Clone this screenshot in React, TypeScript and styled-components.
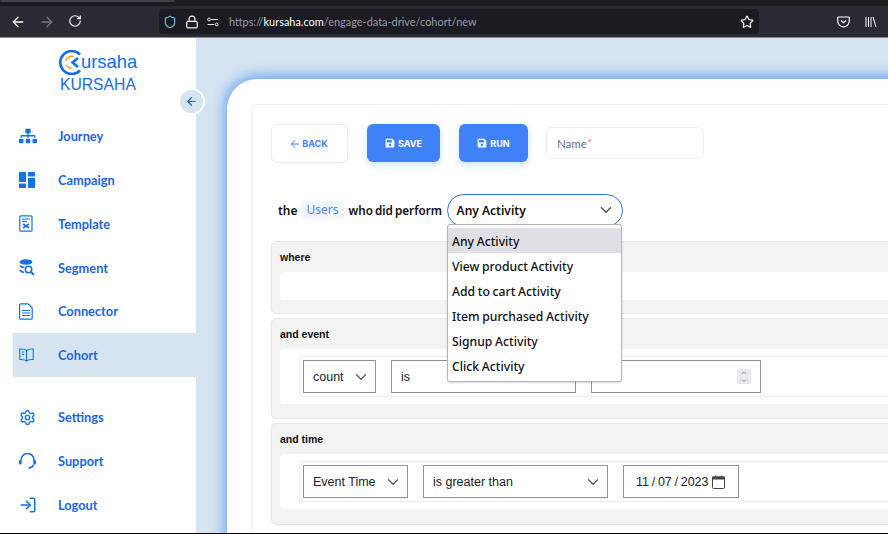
import React from 'react';
import styled, { createGlobalStyle } from 'styled-components';
import {
  ArrowLeft,
  ArrowRight,
  RotateCw,
  Shield,
  Lock,
  Star,
  ChevronDown,
  ChevronUp,
  Settings,
  LogIn,
} from 'lucide-react';
import { FaSitemap, FaSave } from 'react-icons/fa';

const GlobalStyle = createGlobalStyle`
  html, body {
    margin: 0;
    padding: 0;
    width: 888px;
    height: 534px;
    overflow: hidden;
    background: #000;
  }
  * { box-sizing: border-box; }
`;

const Page = styled.div`
  width: 888px;
  height: 533px;
  display: flex;
  flex-direction: column;
  overflow: hidden;
  font-family: 'Lato', sans-serif;
`;

// ===== BROWSER CHROME =====
const TabStrip = styled.div`
  height: 6px;
  flex: none;
  background: #1c1b22;
`;

const ActiveTabEdge = styled.div`
  width: 175px;
  height: 2px;
  background: #42414d;
  border-radius: 0 0 4px 4px;
`;

const Toolbar = styled.div`
  height: 32px;
  flex: none;
  display: flex;
  align-items: center;
  background: #2b2a33;
  border-bottom: 1px solid #8b8b90;
  color: #fbfbfe;
`;

const NavButton = styled.span<{ $dim?: boolean }>`
  width: 28.5px;
  display: flex;
  justify-content: center;
  color: ${p => (p.$dim ? '#77767e' : '#fbfbfe')};
`;

const NavGroup = styled.div`
  display: flex;
  width: 159px;
  padding-left: 4px;
`;

const UrlBar = styled.div`
  width: 600px;
  height: 25px;
  display: flex;
  align-items: center;
  background: #1c1b22;
  border-radius: 4px;
  padding: 0 5px 0 4px;
  gap: 8px;
`;

const Url = styled.div`
  flex: 1;
  font-family: 'Lato', sans-serif;
  font-size: 10.95px;
  color: #9a9aa0;
  white-space: nowrap;
  margin-left: 2px;
`;

const UrlHost = styled.span`
  color: #fbfbfe;
`;

const ToolbarRight = styled.div`
  flex: 1;
  display: flex;
  justify-content: flex-end;
  align-items: center;
  gap: 15px;
  padding-right: 11px;
`;

const LibraryIcon = styled.svg`
  width: 12px;
  height: 12px;
`;

// ===== LAYOUT =====
const Body = styled.div`
  flex: 1;
  display: flex;
  min-height: 0;
`;

const Sidebar = styled.aside`
  width: 196px;
  flex: none;
  position: relative;
  background: #fff;
  display: flex;
  flex-direction: column;
`;

const Brand = styled.div`
  height: 76.3px;
  padding: 11px 0 0 58px;
  color: #0f6fe4;
`;

const BrandTop = styled.div`
  display: flex;
  align-items: center;
  height: 26px;
`;

const BrandTopText = styled.span`
  font-family: 'Liberation Sans', sans-serif;
  font-size: 18.4px;
  margin-left: -3px;
`;

const BrandName = styled.div`
  font-family: 'Liberation Sans', sans-serif;
  font-size: 15.7px;
  line-height: 18px;
  margin: 1px 0 0 2px;
`;

const Collapse = styled.button`
  position: absolute;
  top: 50px;
  left: 178px;
  width: 27px;
  height: 27px;
  border-radius: 50%;
  border: 2px solid #fff;
  background: #d6e4f2;
  color: #1668e3;
  display: flex;
  align-items: center;
  justify-content: center;
  padding: 0;
  z-index: 2;
`;

const NavList = styled.nav`
  display: flex;
  flex-direction: column;
  padding-left: 13px;
`;

const NavItem = styled.div<{ $active?: boolean; $gapTop?: number }>`
  height: 43.8px;
  display: flex;
  align-items: center;
  padding-left: 6px;
  margin-top: ${p => p.$gapTop ?? 0}px;
  background: ${p => (p.$active ? '#d6e4f2' : 'transparent')};
  color: #1668e3;
`;

const NavIcon = styled.span`
  width: 39px;
  height: 20px;
  flex: none;
  display: flex;
  align-items: center;
  color: #1273e6;
`;

const NavLabel = styled.span`
  font-size: 12.8px;
  font-weight: 700;
  color: #1b66e0;
`;

const Main = styled.main`
  flex: 1;
  min-width: 0;
  background: #d6e4f2;
  padding: 41px 0 0 31px;
  overflow: hidden;
`;

const Card = styled.section`
  width: 720px;
  height: 520px;
  background: #fff;
  border-radius: 30px 0 0 0;
  box-shadow: 0 -1px 14px 2px #5f9fee;
  padding: 25px 0 0 25px;
`;

const Inner = styled.div`
  width: 700px;
  height: 480px;
  border: 1px solid #f0f0f0;
  border-radius: 6px 0 0 0;
  padding: 19px 0 0 18px;
`;

// ===== ACTION BAR =====
const Actions = styled.div`
  display: flex;
  align-items: flex-start;
`;

const BackButton = styled.button`
  width: 77px;
  height: 39px;
  background: #fff;
  border: 1px solid #e8ebef;
  border-radius: 6px;
  color: #3f82f7;
  font-family: 'Inter', sans-serif;
  font-size: 9px;
  font-weight: 700;
  display: flex;
  align-items: center;
  justify-content: center;
  gap: 1px;
  padding: 0 2px 0 0;
`;

const PrimaryButton = styled.button<{ $w: number; $ml: number }>`
  width: ${p => p.$w}px;
  height: 38px;
  margin-left: ${p => p.$ml}px;
  background: #3f82f7;
  border: none;
  border-radius: 6px;
  color: #fff;
  font-family: 'Inter', sans-serif;
  font-size: 9px;
  font-weight: 700;
  display: flex;
  align-items: center;
  justify-content: center;
  gap: 3px;
  padding: 0;
  box-shadow: 0 3px 7px rgba(63, 130, 247, 0.25);
`;

const NameField = styled.div`
  width: 158px;
  height: 32px;
  margin: 3px 0 0 18px;
  border: 1px solid #eceff2;
  border-radius: 5px;
  display: flex;
  align-items: center;
  padding-left: 10px;
  font-size: 11.5px;
  color: #5f7080;
`;

const Required = styled.sup`
  color: #ef4444;
  font-size: 9px;
  line-height: 0;
  margin-left: 1px;
`;

// ===== SENTENCE ROW =====
const Sentence = styled.div`
  display: flex;
  align-items: center;
  height: 34px;
  margin-top: 30px;
  padding-left: 7px;
  font-family: 'Noto Sans', sans-serif;
  font-size: 12px;
  font-weight: 600;
  color: #111;
  position: relative;
`;

const Perform = styled.span`
  width: 93px;
  font-size: 11.7px;
  white-space: nowrap;
  word-spacing: -1px;
`;

const UsersTag = styled.span`
  background: #f0f6fd;
  color: #4b86f0;
  font-weight: 400;
  padding: 0 5px;
  line-height: 18px;
  margin: 0 5px 0 4px;
`;

const ActivitySelect = styled.div`
  width: 176px;
  height: 33px;
  margin-left: 5px;
  border: 1px solid #2f6fe6;
  border-radius: 17px;
  display: flex;
  align-items: center;
  justify-content: space-between;
  padding: 0 7px 0 9px;
  color: #111;
`;

const Menu = styled.div`
  position: absolute;
  top: 31px;
  left: 176px;
  width: 175px;
  height: 158px;
  background: #fff;
  border: 1px solid #b5b5bb;
  border-radius: 3px;
  box-shadow: 0 1px 2px rgba(0, 0, 0, 0.15);
  padding-top: 3px;
  z-index: 3;
`;

const MenuOption = styled.div<{ $selected?: boolean }>`
  height: 25px;
  display: flex;
  align-items: center;
  padding: 1px 0 0 4px;
  font-size: 12.2px;
  font-weight: 500;
  word-spacing: -0.5px;
  background: ${p => (p.$selected ? '#e0dfe5' : 'transparent')};
  color: #111;
`;

// ===== FILTER SECTIONS =====
const Sections = styled.div`
  margin: 14px 0 0 0;
  display: flex;
  flex-direction: column;
  gap: 4px;
`;

const Section = styled.div<{ $h: number }>`
  height: ${p => p.$h}px;
  width: 640px;
  background: #f3f3f3;
  border: 1px solid #e6e6e6;
  border-radius: 5px 0 0 5px;
  padding: 9px 0 0 8px;
`;

const SectionTitle = styled.div`
  font-family: 'Liberation Sans', sans-serif;
  font-size: 10.5px;
  font-weight: 700;
  line-height: 12px;
  color: #111;
`;

const SectionBody = styled.div<{ $h: number }>`
  height: ${p => p.$h}px;
  background: #fff;
  border-radius: 4px 0 0 4px;
  margin-top: 9px;
  padding: 7px 0 0 19px;
`;

const Conditions = styled.div`
  height: 41px;
  border: 1px solid #eee;
  border-right: none;
  border-radius: 3px 0 0 3px;
  display: flex;
  align-items: center;
  gap: 15px;
  padding-left: 3px;
  font-family: 'Liberation Sans', sans-serif;
  font-size: 12.5px;
  color: #222;
`;

const Control = styled.div<{ $w: number }>`
  width: ${p => p.$w}px;
  height: 33px;
  border: 1px solid #8f8f9d;
  display: flex;
  align-items: center;
  justify-content: space-between;
  padding: 0 5px 0 9px;
  white-space: nowrap;
`;

const NumberControl = styled(Control)`
  padding-right: 9px;
`;

const DateControl = styled(Control)`
  padding: 0 13px 0 12px;
`;

const Stepper = styled.span`
  width: 14px;
  height: 15px;
  background: #e9e9ed;
  border-radius: 1px;
  display: flex;
  flex-direction: column;
  align-items: center;
  justify-content: center;
  color: #77767e;
`;

const DateText = styled.span`
  font-size: 12.5px;
  word-spacing: -0.75px;
`;

const FieldChevron = () => <ChevronDown size={18} color="#555" strokeWidth={1.6} />;

const navItems: { label: string; icon: React.ReactNode }[] = [
  { label: 'Journey', icon: <FaSitemap size={18} /> },
  {
    label: 'Campaign',
    icon: (
      <svg width="16" height="16" viewBox="0 0 16 16" fill="currentColor">
        <rect x="0" y="0" width="7" height="10" />
        <rect x="9" y="0" width="7" height="4.5" />
        <rect x="0" y="11.5" width="7" height="4.5" />
        <rect x="9" y="6" width="7" height="10" />
      </svg>
    ),
  },
  {
    label: 'Template',
    icon: (
      <svg width="14" height="17" viewBox="0 0 14 17" fill="none" stroke="currentColor" strokeWidth="1.2">
        <rect x="0.8" y="0.8" width="12.2" height="15.4" rx="1" />
        <path d="M3 4h8M3 6.5h5" />
        <path d="M4 9l6 4M10 9l-6 4" strokeWidth="1.6" />
      </svg>
    ),
  },
  {
    label: 'Segment',
    icon: (
      <svg width="16" height="17" viewBox="0 0 16 17" fill="none" stroke="currentColor">
        <ellipse cx="7" cy="3" rx="6.5" ry="2.8" fill="currentColor" stroke="none" />
        <path d="M0.8 6.5c1 1.6 3 2 4.5 2M0.8 11c1 1.6 2.5 2.2 4.2 2.2" strokeWidth="1.6" />
        <circle cx="9.5" cy="10.5" r="3.2" strokeWidth="1.6" />
        <path d="M12 13l3 3" strokeWidth="1.8" />
      </svg>
    ),
  },
  {
    label: 'Connector',
    icon: (
      <svg width="14" height="17" viewBox="0 0 14 17" fill="none" stroke="currentColor" strokeWidth="1.2">
        <path d="M1.6 0.8h7.4l4.2 4.2v10.2c0 .6-.4 1-1 1H1.6c-.6 0-1-.4-1-1V1.8c0-.6.4-1 1-1z" />
        <path d="M3 7.5h8M3 10h8M3 12.5h8" />
      </svg>
    ),
  },
  {
    label: 'Cohort',
    icon: (
      <svg width="15" height="14" viewBox="0 0 15 14" fill="none" stroke="currentColor" strokeWidth="1.1">
        <path d="M7.5 2.5C6 1 3.5 0.8 0.8 1v10.5c2.7-.2 5.2 0 6.7 1.5 1.5-1.5 4-1.7 6.7-1.5V1c-2.7-.2-5.2 0-6.7 1.5z" />
        <path d="M7.5 2.5V13M2.8 4h2.4M2.8 6.5h2.4" />
      </svg>
    ),
  },
];

const bottomItems: { label: string; icon: React.ReactNode }[] = [
  { label: 'Settings', icon: <Settings size={17} strokeWidth={2} /> },
  {
    label: 'Support',
    icon: (
      <svg width="17" height="16" viewBox="0 0 17 16" fill="none" stroke="currentColor" strokeWidth="1.5">
        <path d="M2 8.5V7a6.5 6.5 0 0 1 13 0v1.5" />
        <rect x="0" y="7" width="2.6" height="4.6" rx="1" fill="currentColor" stroke="none" />
        <rect x="14.4" y="7" width="2.6" height="4.6" rx="1" fill="currentColor" stroke="none" />
        <path d="M14.5 11.5c-.4 2.2-2.2 3.4-5 3.4" />
      </svg>
    ),
  },
  { label: 'Logout', icon: <LogIn size={18} strokeWidth={2} /> },
];

const activities = [
  'Any Activity',
  'View product Activity',
  'Add to cart Activity',
  'Item purchased Activity',
  'Signup Activity',
  'Click Activity',
];

const App = () => (
  <>
    <GlobalStyle />
    <Page>
      <TabStrip>
        <ActiveTabEdge />
      </TabStrip>
      <Toolbar>
        <NavGroup>
          <NavButton><ArrowLeft size={16} /></NavButton>
          <NavButton $dim><ArrowRight size={16} /></NavButton>
          <NavButton><RotateCw size={14} /></NavButton>
        </NavGroup>
        <UrlBar>
          <Shield size={14} color="#6fb8e8" />
          <Lock size={14} />
          <svg width="12" height="10" viewBox="0 0 12 10" fill="none" stroke="#e8e8ea" strokeWidth="1">
            <path d="M4 2.5h7M0.5 7.5h7" />
            <circle cx="2" cy="2.5" r="1.4" />
            <circle cx="9.8" cy="7.5" r="1.4" />
          </svg>
          <Url>
            https://<UrlHost>kursaha.com</UrlHost>/engage-data-drive/cohort/new
          </Url>
          <Star size={14} />
        </UrlBar>
        <ToolbarRight>
          <svg width="13" height="12" viewBox="0 0 13 12" fill="none" stroke="#fbfbfe" strokeWidth="1.2">
            <path d="M1.5 1h10c.4 0 .8.4.8.8V5a5.8 5.8 0 0 1-11.6 0V1.8c0-.4.4-.8.8-.8z" />
            <path d="M4 4.5l2.5 2.3L9 4.5" />
          </svg>
          <LibraryIcon viewBox="0 0 12 12" fill="none" stroke="#fbfbfe" strokeWidth="1">
            <path d="M1 1v10M3.5 1v10M6 1v10M8 1l3 10" />
          </LibraryIcon>
        </ToolbarRight>
      </Toolbar>
      <Body>
        <Sidebar>
          <Brand>
            <BrandTop>
              <svg width="26" height="25" viewBox="0 0 26 25" fill="none">
                <path d="M22 4.5A11.5 11.5 0 1 0 22 20.5" stroke="#0f6fe4" strokeWidth="2.6" />
                <path d="M15.5 6.5a6.5 6.5 0 0 0-8 4.5" stroke="#f39a25" strokeWidth="1.3" />
                <path d="M7.8 14.5a6.5 6.5 0 0 0 6.5 3.5" stroke="#f39a25" strokeWidth="1.3" />
                <path d="M20 8l-5.5 4.5 5.5 4.5" stroke="#0f6fe4" strokeWidth="2.6" />
              </svg>
              <BrandTopText>ursaha</BrandTopText>
            </BrandTop>
            <BrandName>KURSAHA</BrandName>
          </Brand>
          <Collapse><ArrowLeft size={13} strokeWidth={2.2} /></Collapse>
          <NavList>
            {navItems.map(item => (
              <NavItem key={item.label} $active={item.label === 'Cohort'}>
                <NavIcon>{item.icon}</NavIcon>
                <NavLabel>{item.label}</NavLabel>
              </NavItem>
            ))}
            {bottomItems.map((item, i) => (
              <NavItem key={item.label} $gapTop={i === 0 ? 18.5 : 0}>
                <NavIcon>{item.icon}</NavIcon>
                <NavLabel>{item.label}</NavLabel>
              </NavItem>
            ))}
          </NavList>
        </Sidebar>
        <Main>
          <Card>
            <Inner>
              <Actions>
                <BackButton><ArrowLeft size={12} strokeWidth={2} /> BACK</BackButton>
                <PrimaryButton $w={73} $ml={19}><FaSave size={10} /> SAVE</PrimaryButton>
                <PrimaryButton $w={69} $ml={19}><FaSave size={10} /> RUN</PrimaryButton>
                <NameField>Name<Required>*</Required></NameField>
              </Actions>
              <Sentence>
                the
                <UsersTag>Users</UsersTag>
                <Perform>who did perform</Perform>
                <ActivitySelect>
                  Any Activity
                  <ChevronDown size={18} color="#555" strokeWidth={2} />
                </ActivitySelect>
                <Menu>
                  {activities.map((a, i) => (
                    <MenuOption key={a} $selected={i === 0}>{a}</MenuOption>
                  ))}
                </Menu>
              </Sentence>
              <Sections>
                <Section $h={73}>
                  <SectionTitle>where</SectionTitle>
                  <SectionBody $h={28} />
                </Section>
                <Section $h={101}>
                  <SectionTitle>and event</SectionTitle>
                  <SectionBody $h={55}>
                    <Conditions>
                      <Control $w={73}>count <FieldChevron /></Control>
                      <Control $w={185}>is</Control>
                      <NumberControl $w={170}>
                        <span />
                        <Stepper>
                          <ChevronUp size={8} strokeWidth={2.5} />
                          <ChevronDown size={8} strokeWidth={2.5} />
                        </Stepper>
                      </NumberControl>
                    </Conditions>
                  </SectionBody>
                </Section>
                <Section $h={102}>
                  <SectionTitle>and time</SectionTitle>
                  <SectionBody $h={55}>
                    <Conditions>
                      <Control $w={105}>Event Time <FieldChevron /></Control>
                      <Control $w={185}>is greater than <FieldChevron /></Control>
                      <DateControl $w={116}>
                        <DateText>11 / 07 / 2023</DateText>
                        <svg width="13" height="14" viewBox="0 0 13 14" fill="none" stroke="#444" strokeWidth="1">
                          <rect x="0.5" y="2" width="12" height="11.5" rx="1" />
                          <rect x="0.5" y="2" width="12" height="2" fill="#444" />
                          <path d="M3.5 0.5v2M9.5 0.5v2" />
                        </svg>
                      </DateControl>
                    </Conditions>
                  </SectionBody>
                </Section>
              </Sections>
            </Inner>
          </Card>
        </Main>
      </Body>
    </Page>
  </>
);

export default App;
